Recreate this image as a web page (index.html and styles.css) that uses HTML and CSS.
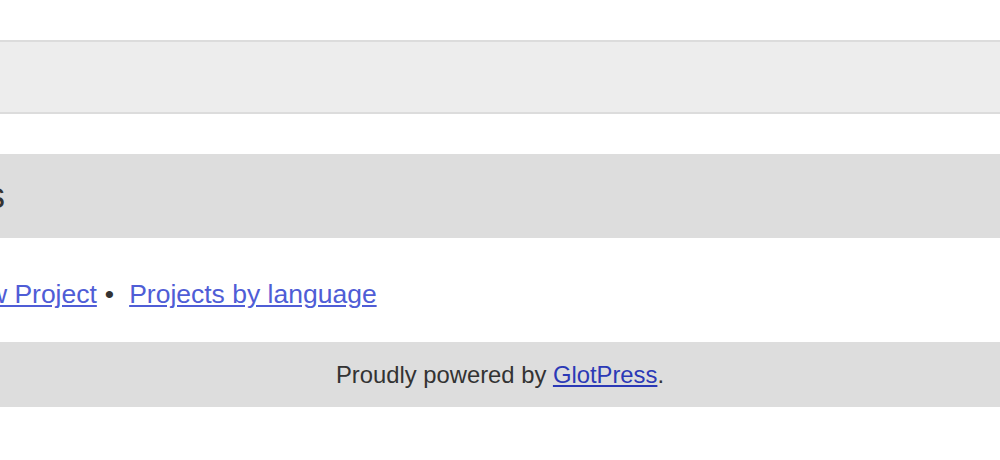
FILE: index.html
```html
<!DOCTYPE html>
<html lang="en">
<head>
<meta charset="utf-8">
<title>GlotPress</title>
<link rel="stylesheet" href="styles.css">
</head>
<body>
<div class="topbar"></div>
<div class="heading-bar">
  <h2 class="heading">Projects</h2>
</div>
<nav class="actions">
  <a class="action" href="#">New Project</a><span class="sep">•</span><a class="action" href="#">Projects by language</a>
</nav>
<footer class="footer">
  Proudly powered by <a class="footer-link" href="#">GlotPress</a>.
</footer>
</body>
</html>
```

FILE: styles.css
```css
html, body {
  margin: 0;
  padding: 0;
  background: #ffffff;
  overflow: hidden;
}

body {
  font-family: "Liberation Sans", Arial, Helvetica, sans-serif;
  color: #333333;
}

.topbar {
  margin-top: 40px;
  height: 70px;
  background: #ededed;
  border-top: 2px solid #dcdcdc;
  border-bottom: 2px solid #dcdcdc;
}

.heading-bar {
  margin-top: 40px;
  height: 84px;
  background: #dddddd;
  overflow: hidden;
}

.heading {
  margin: 0 0 0 -125px;
  font-size: 36px;
  font-weight: normal;
  line-height: 84px;
  color: #333333;
  white-space: nowrap;
}

.actions {
  box-sizing: border-box;
  height: 104px;
  padding-top: 9px;
  line-height: 95px;
  font-size: 26.5px;
  margin-left: -46px;
  white-space: nowrap;
}

.action {
  color: #4f5dd6;
  text-decoration: underline;
}

.sep {
  color: #333333;
  margin-left: 8px;
  margin-right: 15px;
}

.footer {
  height: 65px;
  line-height: 65px;
  background: #dddddd;
  text-align: center;
  font-size: 23.8px;
  color: #333333;
}

.footer-link {
  color: #2b39b6;
  text-decoration: underline;
}
```
